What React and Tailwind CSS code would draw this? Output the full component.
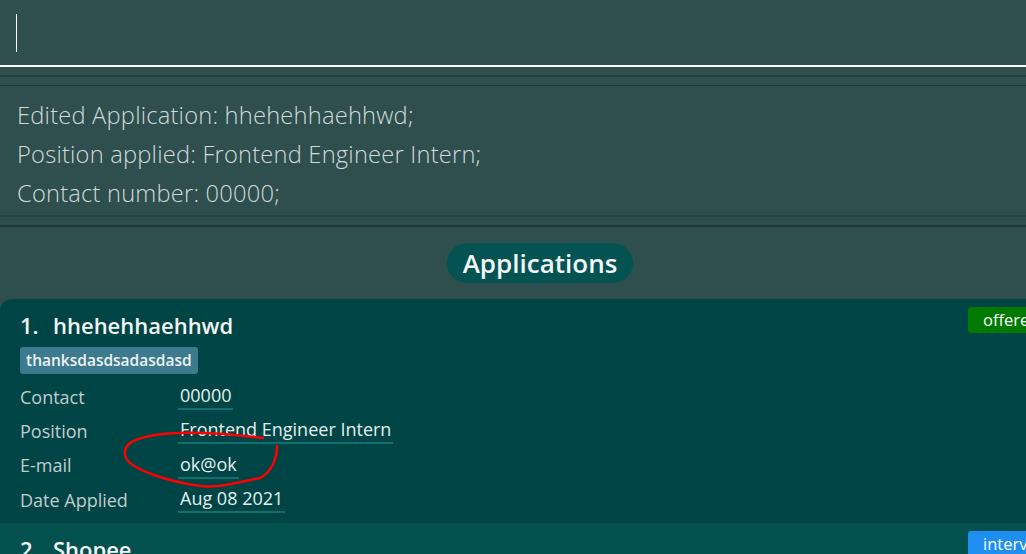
const apps = [
  {
    name: "hhehehhaehhwd",
    tag: "thanksdasdsadasdasd",
    status: "offered",
    statusColor: "bg-[#007a00]",
    bg: "bg-[#004545]",
    rows: [
      ["Contact", "00000"],
      ["Position", "Frontend Engineer Intern"],
      ["E-mail", "ok@ok"],
      ["Date Applied", "Aug 08 2021"],
    ],
  },
  {
    name: "Shopee",
    tag: "",
    status: "interview",
    statusColor: "bg-[#1e8ff0]",
    bg: "bg-[#02514f]",
    rows: [],
  },
];

function Card({ app, index }) {
  return (
    <div className={`relative ${app.bg} ${index === 0 ? "rounded-tl-[12px]" : ""} pl-5 pt-[13px] pb-[6px]`}>
      <div className="absolute left-[968px] top-2 h-[26px] pl-[15px] pr-3 flex items-center text-[16.5px] text-white whitespace-nowrap">
        <span className={`absolute inset-0 rounded-[3px] ${app.statusColor}`}></span>
        <span className="relative">{app.status}</span>
      </div>
      <div className="flex items-center h-[26px] text-[22px] font-semibold text-[#f2f6f6]">
        <span className="w-[33px]">{index + 1}.</span>
        <span>{app.name}</span>
      </div>
      {app.tag && (
        <div className="mt-[9px] inline-flex h-[27px] items-center px-[6px] rounded-[3px] bg-[#3d7a8e] text-[15.5px] font-semibold text-[#eef4f4]">
          {app.tag}
        </div>
      )}
      {app.rows.length > 0 && (
        <div className="mt-[6px] flex flex-col">
          {app.rows.map(([label, value]) => (
            <div key={label} className="flex items-center h-[34.3px] text-[18px]">
              <span className="w-[158px] text-[#c2cccc]">{label}</span>
              <span className="border-b-2 border-[#107070] leading-[22px] pb-[2px] px-[2px] text-[#e4eeee]">{value}</span>
            </div>
          ))}
        </div>
      )}
    </div>
  );
}

export default function App() {
  return (
    <div className="relative w-[1026px] h-[554px] overflow-hidden bg-[#2f4f4f] font-['Open_Sans',sans-serif]">
      <div className="w-[1080px]">
        <div className="h-[67px] flex items-center pl-4 border-b-2 border-white">
          <div className="w-px h-[38px] bg-white"></div>
        </div>
        <div className="mt-[8px] h-[2px] bg-[#223c3c] opacity-80"></div>
        <div className="mt-[8px] h-px bg-[#1f3838]"></div>
        <div className="h-[129px] pl-[17px] pt-[10px] flex flex-col text-[23.7px] font-light text-[#cfdada] tracking-[0.2px]">
          <div className="h-[39px] flex items-center">Edited Application: hhehehhaehhwd;</div>
          <div className="h-[39px] flex items-center">Position applied: Frontend Engineer Intern;</div>
          <div className="h-[39px] flex items-center">Contact number: 00000;</div>
        </div>
        <div className="h-[2px] bg-[#223c3c] opacity-80"></div>
        <div className="mt-[8px] h-[2px] bg-[#1d3535]"></div>
        <div className="flex justify-center pt-[16px] pb-[16px]">
          <div className="h-[40px] px-4 rounded-full bg-[#045353] flex items-center text-[26px] font-semibold text-[#f4f8f8]">
            Applications
          </div>
        </div>
        <div className="flex flex-col">
          {apps.map((app, i) => (
            <Card key={app.name} app={app} index={i} />
          ))}
        </div>
      </div>
      <svg className="absolute left-[120px] top-[426px]" width="165" height="70" viewBox="0 0 165 70" fill="none">
        <path
          d="M143 12 C 110 8, 60 4, 30 10 C 8 14, 2 22, 6 32 C 12 44, 50 56, 80 60 C 100 62, 120 56, 140 52 C 152 46, 157 32, 157 20"
          stroke="#ff0000"
          strokeWidth="2.5"
          strokeLinecap="round"
        />
      </svg>
    </div>
  );
}
